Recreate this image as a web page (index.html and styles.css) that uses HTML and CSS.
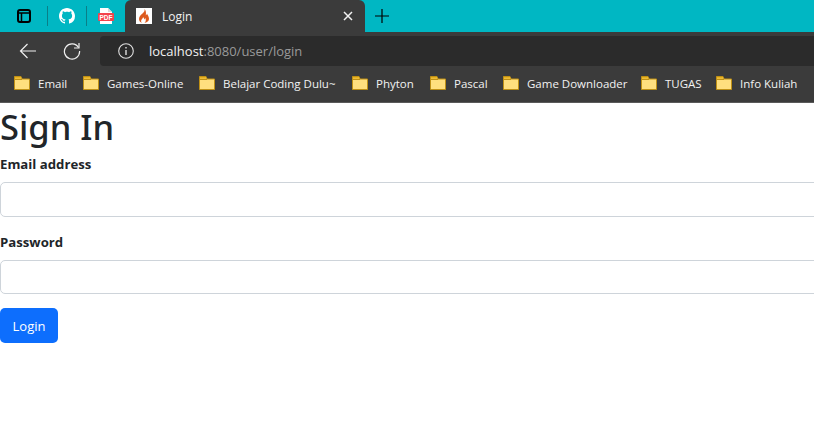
FILE: index.html

```html
<!DOCTYPE html>
<html lang="en">
<head>
  <meta charset="UTF-8" />
  <meta name="viewport" content="width=device-width, initial-scale=1" />
  <title>Login</title>
  <link rel="stylesheet" href="styles.css">
</head>
<body>

<svg class="defs" width="0" height="0" aria-hidden="true">
  <symbol id="folder" viewBox="0 0 16 16">
    <path d="M.5 14.500V1.500h6.500l1 2.500h7.500v10.500z" fill="#ffdf7e" stroke="#bf9015"/>
    <path d="M1 2h5.700l.7 1.800H1z" fill="#e6b022"/>
    <path d="M1 4.500h7" stroke="#bf9015"/>
  </symbol>
</svg>

<!-- Browser chrome -->
<header class="browser">
  <div class="tab-strip">
    <div class="pinned">
      <svg class="icon-sidebar" width="16" height="16" viewBox="0 0 16 16" fill="none" stroke="#000" stroke-width="2">
        <rect x="2" y="2" width="12" height="12" rx="2"/>
        <path d="M2 5h12M5.500 5v9" stroke-width="1.500"/>
      </svg>
      <span class="sep"></span>
      <svg width="16" height="16" viewBox="0 0 16 16" fill="#fff">
        <path d="M8 0C3.580 0 0 3.580 0 8c0 3.540 2.290 6.530 5.470 7.590.4.070.55-.17.55-.38 0-.19-.01-.82-.01-1.490-2.010.37-2.530-.49-2.690-.94-.09-.23-.48-.94-.82-1.130-.28-.15-.68-.52-.01-.53.630-.01 1.080.58 1.230.82.720 1.210 1.870.87 2.330.66.070-.52.280-.87.510-1.070-1.780-.2-3.640-.89-3.640-3.950 0-.87.310-1.590.820-2.150-.08-.2-.36-1.020.080-2.120 0 0 .67-.21 2.200.82.640-.18 1.320-.27 2-.27s1.360.09 2 .27c1.530-1.040 2.200-.82 2.200-.82.440 1.100.160 1.920.080 2.120.510.560.820 1.270.820 2.150 0 3.070-1.870 3.750-3.650 3.950.290.250.540.730.540 1.480 0 1.070-.01 1.930-.01 2.200 0 .21.150.460.550.380A8.010 8.010 0 0 0 16 8c0-4.420-3.580-8-8-8z"/>
      </svg>
      <span class="sep"></span>
      <svg width="16" height="16" viewBox="0 0 16 16">
        <path d="M2 0h8l4 4v12H2z" fill="#fff"/>
        <path d="M10 0v4h4z" fill="#d8d8d8"/>
        <rect x="0" y="5" width="16" height="8" rx="1" fill="#f4434c"/>
        <text class="pdf-label" x="8" y="11.500">PDF</text>
      </svg>
    </div>
    <div class="tab">
      <span class="favicon">
        <svg width="12" height="14" viewBox="0 0 12 14" fill="#dd5a1e">
          <path d="M6.500 0c.6 2-.6 3.200-2 4.600C3 6 1 7.400 1 10c0 1.800 1.200 3.300 3 4-.9-1-1.200-2.200-.5-3.300.4-.8 1.200-1.300 1.600-2.500 1 .7 1.300 1.700 1 2.400.8-.4 1.100-1.100 1-1.900 1 1.400 1.100 3.800-.6 5.300C9.800 13.300 11 11.800 11 9.800c0-2.500-1.500-3.600-2-5.300-.2 1-.6 1.400-1.200 1.800C8.200 4 8 1.500 6.500 0z"/>
        </svg>
      </span>
      <span class="tab-title">Login</span>
      <svg class="tab-close" width="10" height="10" viewBox="0 0 10 10" stroke="#f2f2f2" stroke-width="1.500">
        <path d="M1 1l8 8M9 1l-8 8"/>
      </svg>
    </div>
    <svg class="new-tab" width="16" height="16" viewBox="0 0 16 16" stroke="#000" stroke-width="1.200">
      <path d="M8 1v14M1 8h14"/>
    </svg>
  </div>

  <div class="toolbar">
    <svg class="btn-back" width="18" height="16" viewBox="0 0 18 16" fill="none" stroke="#f0f0f0" stroke-width="1.200">
      <path d="M17 8H1.500M8.500 1L1.500 8l7 7"/>
    </svg>
    <svg class="btn-reload" width="18" height="18" viewBox="0 0 18 18" fill="none" stroke="#f0f0f0" stroke-width="1.200">
      <path d="M15.500 5.500A7.600 7.600 0 1 0 16.600 9"/>
      <path d="M16 1v5h-5"/>
    </svg>
    <div class="address">
      <svg width="16" height="16" viewBox="0 0 16 16" fill="none" stroke="#e0e0e0" stroke-width="1.100">
        <circle cx="8" cy="8" r="7.300"/>
        <path d="M8 7v5M8 4v1.500" stroke-width="1.400"/>
      </svg>
      <span class="url">localhost<span class="url-rest">:8080/user/login</span></span>
    </div>
  </div>

  <nav class="bookmarks">
    <a href="#"><svg width="16" height="16"><use href="#folder"/></svg>Email</a>
    <a href="#"><svg width="16" height="16"><use href="#folder"/></svg>Games-Online</a>
    <a href="#"><svg width="16" height="16"><use href="#folder"/></svg>Belajar Coding Dulu~</a>
    <a href="#"><svg width="16" height="16"><use href="#folder"/></svg>Phyton</a>
    <a href="#"><svg width="16" height="16"><use href="#folder"/></svg>Pascal</a>
    <a href="#"><svg width="16" height="16"><use href="#folder"/></svg>Game Downloader</a>
    <a href="#"><svg width="16" height="16"><use href="#folder"/></svg>TUGAS</a>
    <a href="#"><svg width="16" height="16"><use href="#folder"/></svg>Info Kuliah</a>
  </nav>
</header>

<!-- Page -->
<main class="page">
  <h1>Sign In</h1>
  <form>
    <div class="field">
      <label for="email">Email address</label>
      <input type="email" id="email">
    </div>
    <div class="field">
      <label for="password">Password</label>
      <input type="password" id="password">
    </div>
    <button type="submit">Login</button>
  </form>
</main>

</body>
</html>
```

FILE: styles.css

```css
html, body {
  margin: 0;
  padding: 0;
  height: 100%;
  overflow: hidden;
  background: white;
}
body {
  font-family: "Open Sans", "Noto Sans", sans-serif;
  color: #212529;
}
.defs {
  display: block;
  height: 0;
}

/* Barre du navigateur */
.browser {
  background: #3b3b3b;
  border-bottom: 1px solid #5a5a5a;
}
.tab-strip {
  height: 32px;
  background: #00b7c3;
  display: flex;
  align-items: center;
}
.pinned {
  width: 125px;
  padding-left: 16px;
  box-sizing: border-box;
  display: flex;
  align-items: center;
}
.icon-sidebar {
  margin-right: 4px;
}
.sep {
  width: 1px;
  height: 20px;
  background: #0a7f88;
  margin: 0 11px;
}
.pdf-label {
  font-family: "Liberation Sans", sans-serif;
  font-size: 6.500px;
  font-weight: bold;
  fill: white;
  text-anchor: middle;
}
.tab {
  width: 240px;
  height: 32px;
  background: #3b3b3b;
  border-radius: 6px 6px 0 0;
  display: flex;
  align-items: center;
  box-sizing: border-box;
  padding: 0 12px 0 11px;
}
.favicon {
  width: 16px;
  height: 16px;
  background: white;
  display: flex;
  align-items: center;
  justify-content: center;
}
.tab-title {
  flex: 1;
  margin-left: 10px;
  font-size: 12px;
  color: #f2f2f2;
}
.new-tab {
  margin-left: 9px;
}

.toolbar {
  height: 34px;
  display: flex;
  align-items: flex-end;
}
.btn-back {
  margin: 0 0 7px 19px;
}
.btn-reload {
  margin: 0 0 6px 26px;
}
.address {
  flex: 1;
  height: 30px;
  margin-left: 19px;
  background: #2b2b2b;
  border-radius: 4px 0 0 4px;
  display: flex;
  align-items: center;
  padding-left: 18px;
}
.url {
  margin-left: 15px;
  font-size: 13px;
  color: #f2f2f2;
}
.url-rest {
  color: #9a9a9a;
}

.bookmarks {
  height: 36px;
  padding: 0 0 2px 14px;
  box-sizing: border-box;
  display: grid;
  grid-template-columns: 69px 116px 153px 78px 73px 138px 75px auto;
  align-items: center;
  white-space: nowrap;
  overflow: hidden;
}
.bookmarks a {
  display: flex;
  align-items: center;
  gap: 8px;
  font-size: 11.500px;
  color: #f2f2f2;
  text-decoration: none;
}

/* Contenu */
.page h1 {
  margin: 0 0 4px;
  font-family: "Noto Sans", sans-serif;
  font-size: 34.500px;
  font-weight: 500;
  line-height: 47px;
}
.field {
  margin-bottom: 14px;
}
.field label {
  display: block;
  font-size: 13.200px;
  font-weight: 700;
  line-height: 21px;
  margin-bottom: 7px;
}
.field input {
  display: block;
  width: 840px;
  height: 34.500px;
  box-sizing: border-box;
  border: 1px solid #ced4da;
  border-radius: 5px;
  background: white;
  padding: 0 10px;
}
.field + .field {
  margin-top: 15px;
}
button {
  display: block;
  width: 58px;
  height: 35px;
  padding: 0;
  background: #0d6efd;
  color: white;
  border: none;
  border-radius: 5px;
  font-family: inherit;
  font-size: 13px;
}
```
